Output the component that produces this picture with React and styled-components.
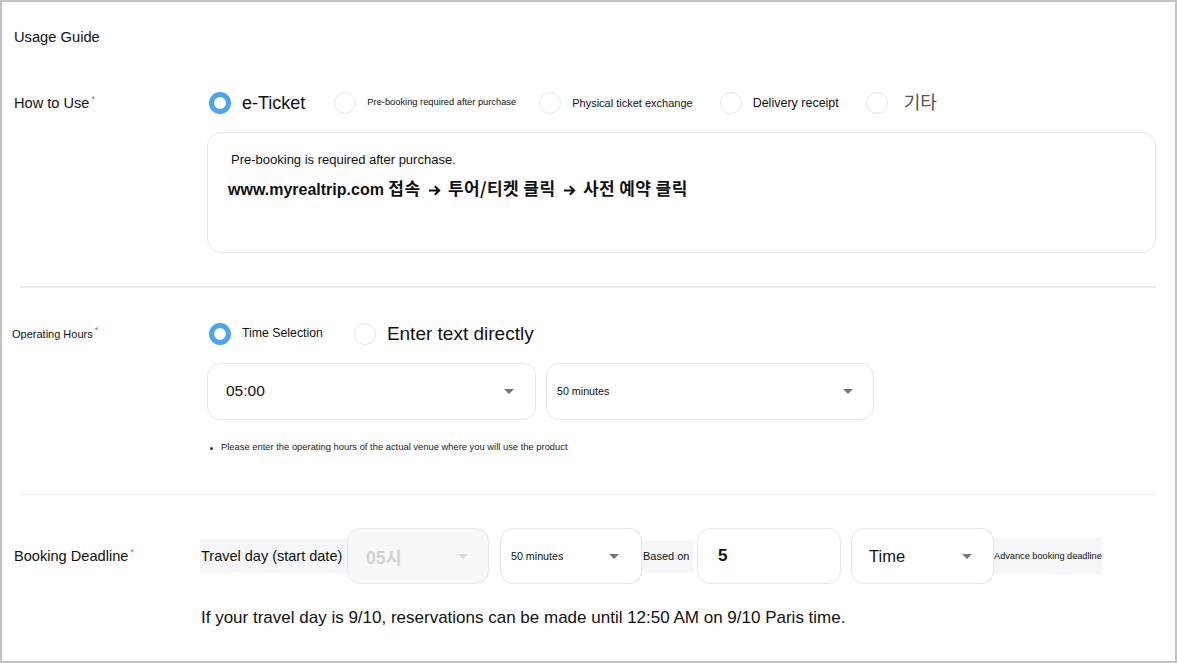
import React from 'react'
import styled, { createGlobalStyle } from 'styled-components'

const Global = createGlobalStyle`
  body {
    margin: 0;
    background: #fff;
    font-family: "Liberation Sans", "Noto Sans CJK KR", sans-serif;
    color: #111;
  }
`

function Radio({ checked, children, size, color, gap }) {
  return (
    <Option $gap={gap}>
      <Circle $checked={checked} />
      <OptionText $size={size} $color={color}>{children}</OptionText>
    </Option>
  )
}

function Select({ children, width, size, disabled, pad, gap, arrowRight }) {
  return (
    <SelectBox $width={width} $disabled={disabled} $pad={pad} $gap={gap} $arrowRight={arrowRight}>
      <SelectText $size={size} $disabled={disabled}>{children}</SelectText>
      <Caret $disabled={disabled} />
    </SelectBox>
  )
}

// bold arrow glyph used between the steps
const Arrow = () => (
  <ArrowSvg width="13" height="11" viewBox="0 0 13 11" aria-hidden="true">
    <path d="M1 5.5h10M6.8 1.3l4.4 4.2-4.4 4.2" fill="none" stroke="#111" strokeWidth="2" />
  </ArrowSvg>
)

function App() {
  return (
    <>
      <Global />
      <Frame>
        <Title>Usage Guide</Title>

        <Row $top={45}>
          <Label $width={193} $h={22}>How to Use<Req>*</Req></Label>
          <Content>
            <Radios>
              <Radio checked size={18}>e-Ticket</Radio>
              <Radio size={9.3} gap={29}>Pre-booking required after purchase</Radio>
              <Radio size={11} gap={23}>Physical ticket exchange</Radio>
              <Radio size={12.5} gap={27}>Delivery receipt</Radio>
              <Radio size={18} gap={27} color="#555">&nbsp;기타</Radio>
            </Radios>
            <TextArea>
              <Line>Pre-booking is required after purchase.</Line>
              <StrongLine>
                www.myrealtrip.com <Hangul>접속 <Arrow /> 투어/티켓 클릭 <Arrow /> 사전 예약 클릭</Hangul>
              </StrongLine>
            </TextArea>
          </Content>
        </Row>

        <Divider $top={33} />

        <Row $top={35}>
          <Label $width={193} $h={22} $small>Operating Hours<Req>*</Req></Label>
          <Content>
            <Radios>
              <Radio checked size={12.3}>Time Selection</Radio>
              <Radio size={19} gap={31}>Enter text directly</Radio>
            </Radios>
            <SelectRow>
              <Select width={329} size={15.5} pad={18} arrowRight={21}>05:00</Select>
              <Select width={328} size={10.7} pad={10} gap={10} arrowRight={20}>50 minutes</Select>
            </SelectRow>
            <Note>Please enter the operating hours of the actual venue where you will use the product</Note>
          </Content>
        </Row>

        <Divider $top={41} />

        <Row $top={33}>
          <Label $width={186} $h={56}>Booking Deadline<Req>*</Req></Label>
          <Content>
            <Deadline>
              <Chip $width={147} $size={14.5} $h={34}>Travel day (start date)</Chip>
              <Select width={142} size={17.5} pad={18} disabled arrowRight={20}>05시</Select>
              <Select width={142} size={10.7} pad={10} gap={11} arrowRight={22}>50 minutes</Select>
              <Chip $width={51} $size={11} $h={33}>Based on</Chip>
              <NumberBox>5</NumberBox>
              <Select width={143} size={16.5} pad={17} gap={10} arrowRight={21}>Time</Select>
              <Chip $width={108} $size={9.2} $h={36} $pad={0}>Advance booking deadline</Chip>
            </Deadline>
            <Sentence>If your travel day is 9/10, reservations can be made until 12:50 AM on 9/10 Paris time.</Sentence>
          </Content>
        </Row>
      </Frame>
    </>
  )
}

export default App

const Frame = styled.div`
  box-sizing: border-box;
  width: 1177px;
  height: 663px;
  border: 2px solid #c3c3c3;
  background: #fff;
  overflow: hidden;
`

const Title = styled.div`
  margin: 25px 0 0 12px;
  font-size: 14.7px;
  line-height: 20px;
  height: 20px;
`

const Row = styled.div`
  display: flex;
  align-items: flex-start;
  margin-top: ${p => p.$top}px;
  padding-left: 12px;
`

const Label = styled.div`
  flex: none;
  width: ${p => p.$width}px;
  height: ${p => p.$h}px;
  display: flex;
  align-items: center;
  font-size: ${p => (p.$small ? '11px' : '14.6px')};
  margin-left: ${p => (p.$small ? '-2px' : '0')};
  padding-right: ${p => (p.$small ? '2px' : '0')};
  box-sizing: content-box;
  white-space: nowrap;
`

const Req = styled.span`
  color: #f0454f;
  font-size: 9px;
  line-height: 10px;
  margin-left: 2px;
  position: relative;
  top: -4px;
`

const Content = styled.div`
  display: flex;
  flex-direction: column;
  flex: 1;
`

const Radios = styled.div`
  display: flex;
  align-items: center;
  height: 22px;
  padding-left: 2px;
`

const Option = styled.label`
  display: flex;
  align-items: center;
  gap: 11px;
  margin-left: ${p => p.$gap || 0}px;
`

const Circle = styled.span`
  box-sizing: border-box;
  width: 22px;
  height: 22px;
  border-radius: 50%;
  flex: none;
  background: #fff;
  border: ${p => (p.$checked ? '5px solid #4ea4f4' : '1.5px solid #e3e6ea')};
`

const OptionText = styled.span`
  font-size: ${p => p.$size}px;
  color: ${p => p.$color || '#111'};
  white-space: nowrap;
  line-height: 1;
`

const TextArea = styled.div`
  box-sizing: border-box;
  margin-top: 18px;
  width: 949px;
  height: 121px;
  border: 1.5px solid #e6e9ec;
  border-radius: 14px;
  padding: 19px 0 0 20px;
`

const Line = styled.div`
  font-size: 13px;
  line-height: 16px;
  padding-left: 3px;
`

const StrongLine = styled.div`
  margin-top: 9px;
  font-size: 16px;
  line-height: 22px;
  font-weight: 700;
  white-space: nowrap;
`

const Hangul = styled.span`
  font-family: "Noto Sans CJK KR", sans-serif;
  font-size: 17px;
  letter-spacing: 0.4px;
`

const ArrowSvg = styled.svg`
  display: inline-block;
  vertical-align: -1px;
  margin: 0 3px;
`

const Divider = styled.div`
  height: 1.5px;
  background: #e9ecef;
  margin: ${p => p.$top}px 19px 0 18px;
`

const SelectRow = styled.div`
  display: flex;
  margin-top: 18px;
`

const SelectBox = styled.div`
  box-sizing: border-box;
  flex: none;
  width: ${p => p.$width}px;
  height: 57px;
  margin-left: ${p => p.$gap || 0}px;
  border: 1.5px solid #e4e7eb;
  border-radius: 13px;
  background: ${p => (p.$disabled ? '#f7f8f9' : '#fff')};
  display: flex;
  align-items: center;
  justify-content: space-between;
  padding: 0 ${p => p.$arrowRight}px 0 ${p => p.$pad}px;
`

const SelectText = styled.span`
  font-size: ${p => p.$size}px;
  color: ${p => (p.$disabled ? '#cfd3d8' : '#111')};
  font-weight: ${p => (p.$disabled ? 700 : 400)};
  white-space: nowrap;
`

const Caret = styled.span`
  width: 0;
  height: 0;
  border-left: 5px solid transparent;
  border-right: 5px solid transparent;
  border-top: 5px solid ${p => (p.$disabled ? '#d4d8dc' : '#777')};
`

const Note = styled.div`
  margin-top: 21px;
  display: flex;
  align-items: center;
  font-size: 9.4px;
  line-height: 12px;
  color: #222;
  padding-left: 3px;

  &::before {
    content: '';
    width: 3px;
    height: 3px;
    border-radius: 50%;
    background: #333;
    margin-right: 8px;
    position: relative;
    top: 2px;
  }
`

const Deadline = styled.div`
  display: flex;
  align-items: center;
  height: 56px;
  & > ${SelectBox} {
    height: 56px;
  }
`

const Chip = styled.div`
  box-sizing: border-box;
  flex: none;
  width: ${p => p.$width}px;
  height: ${p => p.$h}px;
  padding-left: ${p => (p.$pad === undefined ? 1 : p.$pad)}px;
  background: #f5f6f8;
  display: flex;
  align-items: center;
  font-size: ${p => p.$size}px;
  white-space: nowrap;
  overflow: hidden;
`

const NumberBox = styled.div`
  box-sizing: border-box;
  flex: none;
  width: 144px;
  height: 56px;
  margin-left: 4px;
  border: 1.5px solid #e4e7eb;
  border-radius: 13px;
  display: flex;
  align-items: center;
  padding-left: 20px;
  font-size: 17px;
  font-weight: 700;
`

const Sentence = styled.div`
  margin-top: 24px;
  font-size: 17px;
  line-height: 20px;
  padding-left: 1px;
`
